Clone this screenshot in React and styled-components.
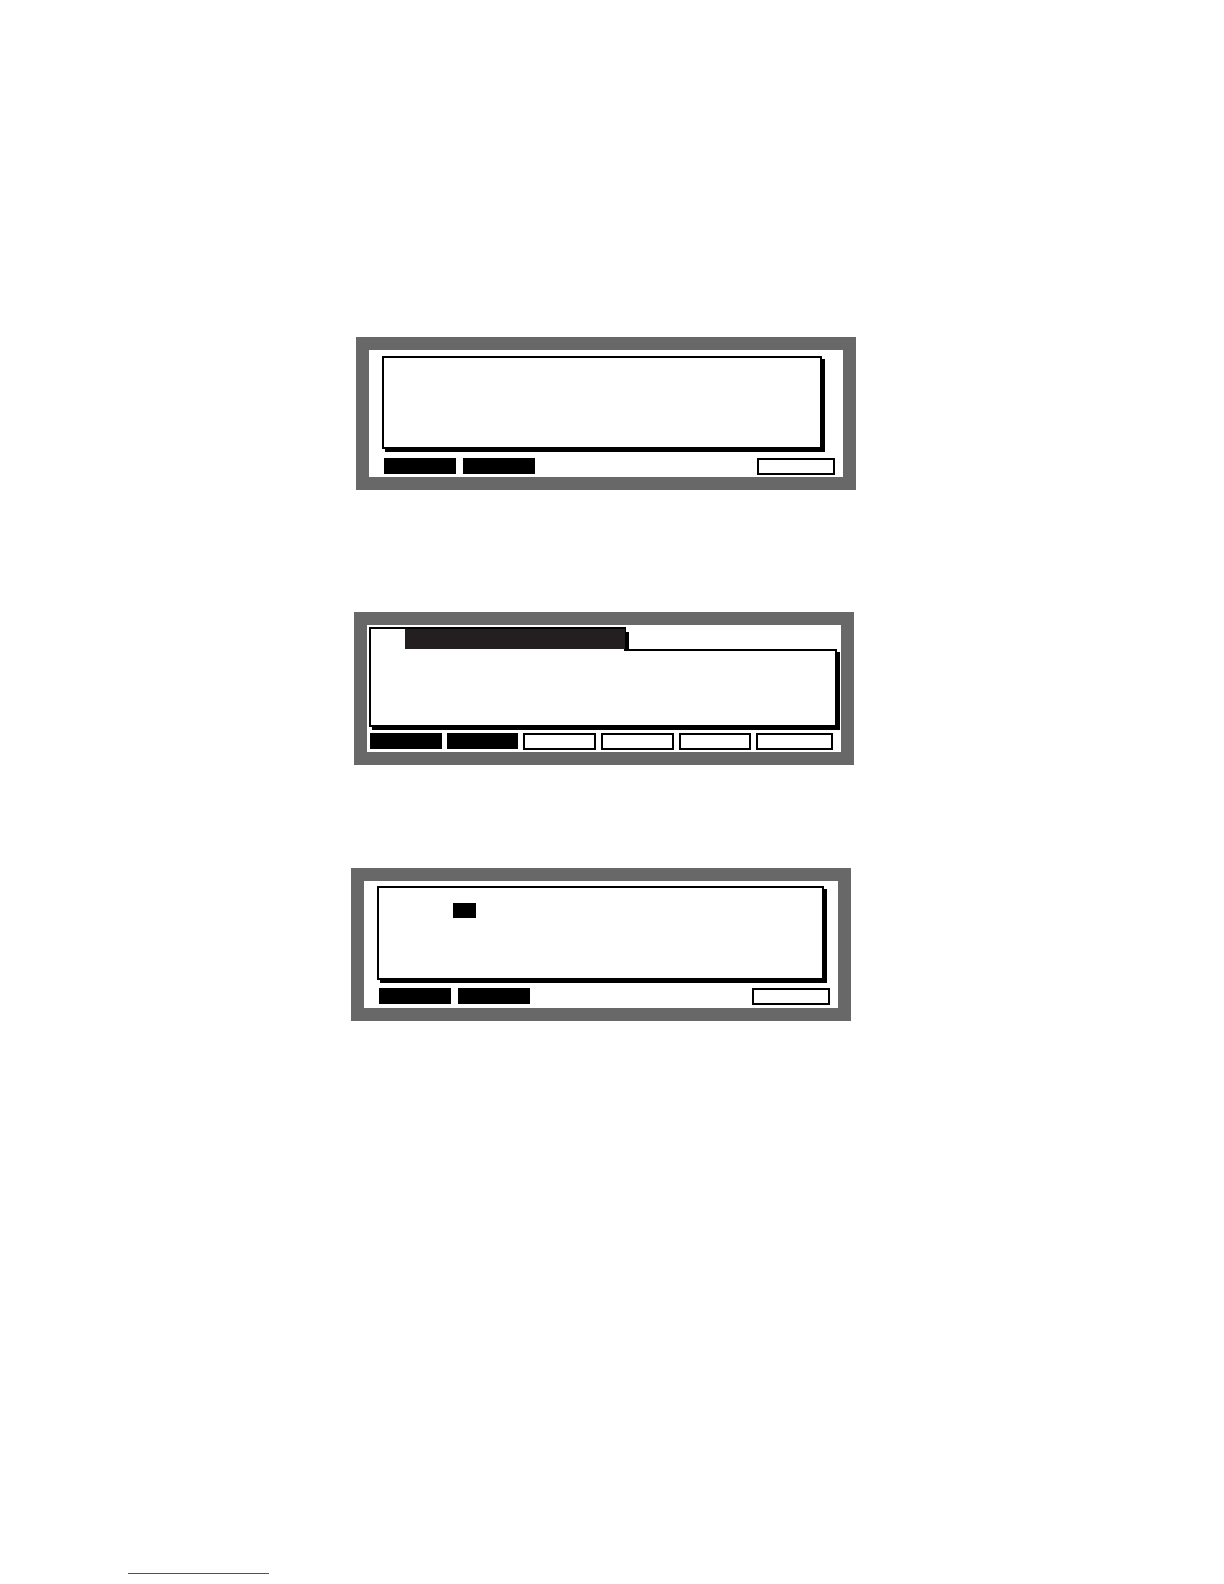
import React from 'react'
import styled, { createGlobalStyle } from 'styled-components'

const GlobalStyle = createGlobalStyle`
html, body{
    margin: 0;
    padding: 0;
    background: #ffffff;
    font-family: "Liberation Sans", Arial, sans-serif;
}
`

const Page = styled.div`
width: 1224px;
min-height: 1584px;
box-sizing: border-box;
padding-top: 337px;
display: flex;
flex-direction: column;
background: #ffffff;
`

const Panel = styled.div`
width: 500px;
height: 153px;
box-sizing: border-box;
margin-left: ${p => p.$left}px;
margin-top: ${p => p.$top || 0}px;
padding: 13px;
background: #686868;
`

const Screen = styled.div`
width: 100%;
height: 100%;
background: #ffffff;
display: flex;
flex-direction: column;
box-sizing: border-box;
padding-top: ${p => p.$top}px;
`

const Display = styled.div`
box-sizing: border-box;
width: ${p => p.$width}px;
height: ${p => p.$height}px;
margin-left: 13px;
border: 2px solid #000;
box-shadow: 3px 3px 0 #000;
padding: 15px 0 0 74px;
`

const Cursor = styled.div`
width: 23px;
height: 15px;
background: #000;
`

const TabbedDisplay = styled.div`
display: flex;
flex-direction: column;
margin-left: 2px;
width: 468px;
`

const Tab = styled.div`
position: relative;
z-index: 1;
box-sizing: border-box;
width: 257px;
height: 24px;
margin-bottom: -2px;
border: 2px solid #000;
border-bottom: none;
background: #ffffff;
padding: 0 0 2px 34px;
display: flex;
&::after{
    content: '';
    position: absolute;
    right: -5px;
    top: 3px;
    bottom: 2px;
    width: 3px;
    background: #000;
}
`

const TabFill = styled.div`
flex: 1;
background: #231f20;
margin-right: -1px;
`

const Body = styled.div`
box-sizing: border-box;
height: 78px;
border: 2px solid #000;
box-shadow: 3px 3px 0 #000;
`

const Keys = styled.div`
display: flex;
align-items: flex-start;
gap: ${p => p.$gap}px;
margin-top: ${p => p.$top}px;
padding: 0 8px 0 ${p => p.$left}px;
`

const Key = styled.div`
box-sizing: border-box;
width: ${p => p.$width || 72}px;
height: ${p => p.$dark ? 16 : 17}px;
background: ${p => p.$dark ? '#000' : '#fff'};
border: ${p => p.$dark ? 'none' : '2px solid #000'};
margin-left: ${p => p.$push ? 'auto' : '0'};
`

const FootLine = styled.div`
width: 141px;
height: 1px;
margin: 552px 0 0 128px;
background: #3b3bff;
`

const SimplePanel = ({ left, top, pad, width, height, gap, cursor }) => (
    <Panel $left={left} $top={top}>
        <Screen $top={pad}>
            <Display $width={width} $height={height}>{cursor && <Cursor />}</Display>
            <Keys $gap={7} $top={gap} $left={15}>
                <Key $dark />
                <Key $dark />
                <Key $push $width={78} />
            </Keys>
        </Screen>
    </Panel>
)

const App = () => {
    const softKeys = [72, 72, 73, 73, 73, 77]
    return (
        <>
            <GlobalStyle />
            <Page>
                <SimplePanel left={356} pad={6} width={440} height={93} gap={9} />
                <Panel $left={354} $top={122}>
                    <Screen $top={2}>
                        <TabbedDisplay>
                            <Tab><TabFill /></Tab>
                            <Body />
                        </TabbedDisplay>
                        <Keys $gap={5} $top={6} $left={3}>
                            {softKeys.map((w, i) => (
                                <Key key={i} $width={w} $dark={i < 2} />
                            ))}
                        </Keys>
                    </Screen>
                </Panel>
                <SimplePanel left={351} top={103} pad={5} width={447} height={94} gap={8} cursor />
                <FootLine />
            </Page>
        </>
    )
}

export default App
